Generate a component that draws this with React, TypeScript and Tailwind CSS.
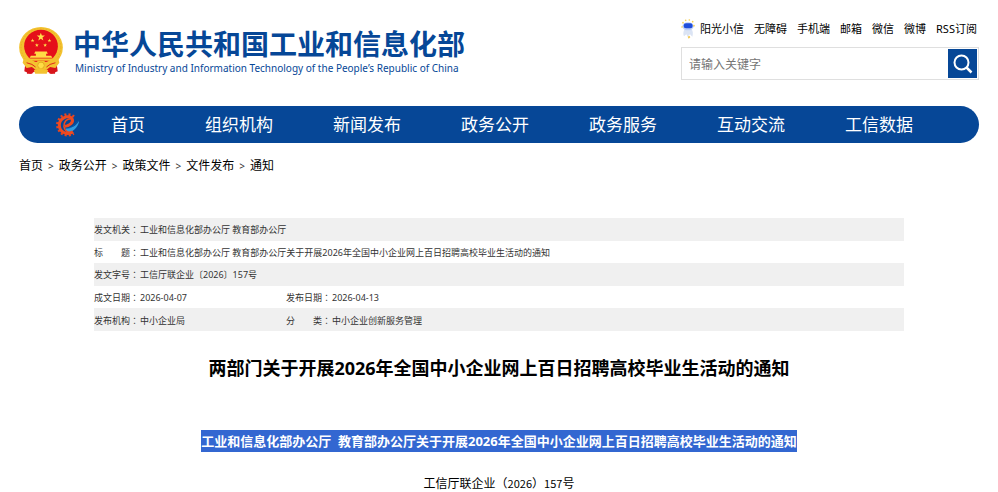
import React from "react";

const SANS = "font-['Noto_Sans','Noto_Sans_CJK_SC',sans-serif]";

const topLinks = ["无障碍", "手机端", "邮箱", "微信", "微博", "RSS订阅"];
const navLinks = ["首页", "组织机构", "新闻发布", "政务公开", "政务服务", "互动交流", "工信数据"];
const crumbs = ["首页", "政务公开", "政策文件", "文件发布", "通知"];

const STAR = "M0-10 2.4-3.2 9.5-3.1 3.8 1.2 5.9 8.1 0 4-5.9 8.1-3.8 1.2-9.5-3.1-2.4-3.2Z";

function Emblem() {
  return (
    <svg viewBox="0 0 133 142" className="h-[47px] w-[44px] shrink-0" role="img" aria-label="国徽">
      <path d="M20 104 16 134 34 141 50 134 83 134 99 141 117 134 113 104Z" fill="#d8151b" />
      <ellipse cx="66.5" cy="62" rx="66" ry="62" fill="#f3c22f" />
      <ellipse cx="66.5" cy="62" rx="60" ry="57" fill="none" stroke="#e3aa20" strokeWidth="2" strokeDasharray="5 4" />
      <ellipse cx="66.5" cy="58" rx="51" ry="50" fill="#e50f1a" />
      <path d={STAR} transform="translate(66 30) scale(1.3)" fill="#ffe04a" />
      <path d={STAR} transform="translate(41 41) scale(.6)" fill="#ffe04a" />
      <path d={STAR} transform="translate(54 55) scale(.6)" fill="#ffe04a" />
      <path d={STAR} transform="translate(79 55) scale(.6)" fill="#ffe04a" />
      <path d={STAR} transform="translate(92 41) scale(.6)" fill="#ffe04a" />
      <path d="M49 74H84L87 81H82V87H97L101 93H32L36 87H51V81H46Z" fill="#ffdc45" />
      <path d="M31 95H102V102H31Z" fill="#f5c52e" />
      <path d="M14 96C30 96 38 104 49 108L57 103H76L84 108C95 104 103 96 119 96L122 108 110 124 94 121 82 130 66 124 51 130 39 121 23 124 11 108Z" fill="#f3c22f" />
      <path d="M23 108 39 113 50 121M110 108 94 113 83 121" fill="none" stroke="#e0251b" strokeWidth="3" />
      <circle cx="66.5" cy="116" r="10" fill="#ffdc45" stroke="#e3aa20" strokeWidth="3" />
      <path d="M24 126 34 131 45 126 40 141H24ZM109 126 99 131 88 126 93 141H109Z" fill="#d8151b" />
      <path d="M45 130 66 124 88 130 84 141H49Z" fill="#f3c22f" />
    </svg>
  );
}

function Mascot() {
  return (
    <svg viewBox="0 0 42 60" className="h-5 w-3.5 shrink-0" aria-hidden="true">
      <path d="M11 30C6 38 6 46 9 52L16 46 20 53 27 46 34 53C37 44 36 36 31 30Z" fill="#dbe4f4" />
      <ellipse cx="21" cy="22" rx="17" ry="12" fill="#bccdf7" />
      <rect x="8" y="13" width="27" height="15" rx="7" fill="#1f4edb" />
      <g fill="#f7cf4e">
        <circle cx="6" cy="11" r="2.5" /><circle cx="14" cy="4" r="2.5" /><circle cx="25" cy="3" r="2.5" />
        <circle cx="35" cy="8" r="2.5" /><circle cx="3" cy="24" r="2.5" /><circle cx="39" cy="20" r="2.5" />
      </g>
      <path d="M20 53 25 50 28 55 23 59Z" fill="#f0c752" />
    </svg>
  );
}

function GearE() {
  return (
    <svg viewBox="0 0 72 72" className="size-6 shrink-0" aria-hidden="true">
      <path d="M57 11A31 31 0 1 0 56 61" fill="none" stroke="#e8451f" strokeWidth="8" strokeDasharray="6 6" />
      <path d="M40 58C52 58 70 44 73 22 60 44 46 44 32 46 32 52 34 56 40 58Z" fill="#2f9be0" />
      <path d="M32 46C48 48 58 36 71 24" fill="none" stroke="#0f62b4" strokeWidth="2" />
      <path d="M54 56C40 66 15 62 13 38 11 14 42 4 51 17 57 28 44 38 29 40" fill="none" stroke="#ee4a20" strokeWidth="9" />
      <path d="M48 17C34 17 26 28 27 41 29 52 36 58 45 59" fill="none" stroke="#ee4a20" strokeWidth="5" />
      <path d="M43 22C36 23 32 29 31 35 39 34 45 29 43 22Z" fill="#064797" />
    </svg>
  );
}

function Label({ text }: { text: string }) {
  return (
    <th scope="row" className="p-0 pt-0.5 text-left font-normal whitespace-nowrap">
      {text}
      <span className="font-['Noto_Sans_CJK_TC',sans-serif]">：</span>
    </th>
  );
}

function Cell({ span, children }: { span?: number; children: React.ReactNode }) {
  return <td colSpan={span} className="p-0 pt-0.5">{children}</td>;
}

function Row({ shaded, children }: { shaded?: boolean; children: React.ReactNode }) {
  return <tr className={shaded ? "bg-[#f0f0f0]" : ""}>{children}</tr>;
}

export default function App() {
  return (
    <div className={`${SANS} bg-white px-[19px] text-black`}>
      <header className="flex justify-between pt-[18px]">
        <a href="#" className="mt-2 flex h-12 items-center gap-2.5 text-[#064797]">
          <Emblem />
          <span className="flex flex-col whitespace-nowrap">
            <span className="text-[28px] leading-9 font-bold">中华人民共和国工业和信息化部</span>
            <span className="pl-0.5 font-['Noto_Sans',sans-serif] text-[10px] leading-3">
              Ministry of Industry and Information Technology of the People’s Republic of China
            </span>
          </span>
        </a>
        <div className="w-[298px]">
          <nav className="flex items-center gap-2.5 text-[11px] leading-[22px] whitespace-nowrap">
            <a href="#" className="flex items-center gap-[5px]">
              <Mascot />
              阳光小信
            </a>
            {topLinks.map((t) => (
              <a key={t} href="#">{t}</a>
            ))}
          </nav>
          <form className="mt-[7px] flex h-[33px] items-center border border-[#dfdfdf] pr-px" onSubmit={(e) => e.preventDefault()}>
            <input
              type="text"
              aria-label="请输入关键字"
              placeholder="请输入关键字"
              className="min-w-0 flex-1 px-[7px] pt-0.5 text-xs outline-none placeholder:text-[#757575]"
            />
            <button type="submit" aria-label="搜索" className="flex size-[29px] items-center justify-center bg-[#064797]">
              <svg viewBox="0 0 20 20" className="size-5" fill="none" stroke="#fff" strokeWidth="2">
                <circle cx="8.5" cy="8.5" r="7" />
                <path d="m13.5 13.5 5 5" strokeWidth="2.5" />
              </svg>
            </button>
          </form>
        </div>
      </header>

      <nav className="mt-[26px] flex h-[37px] items-center rounded-full bg-[#064797] pl-9 text-[17px] text-white">
        <GearE />
        <ul className="ml-8 flex gap-15 whitespace-nowrap">
          {navLinks.map((t) => (
            <li key={t}><a href="#">{t}</a></li>
          ))}
        </ul>
      </nav>

      <nav aria-label="当前位置" className="mt-[13px] text-xs leading-5">
        {crumbs.map((t, i) => (
          <React.Fragment key={t}>
            {i > 0 && <span className="px-[5px] text-[10px] text-[#333]">&gt;</span>}
            <a href="#">{t}</a>
          </React.Fragment>
        ))}
      </nav>

      <main className="px-[75px] pt-[42px]">
        <table className="h-[113px] w-full table-fixed border-collapse text-[9px] leading-3 text-[#333]">
          <colgroup>
            <col className="w-[46px]" />
            <col className="w-[146px]" />
            <col className="w-[46px]" />
            <col />
          </colgroup>
          <tbody>
            <Row shaded>
              <Label text="发文机关" />
              <Cell span={3}>工业和信息化部办公厅 教育部办公厅</Cell>
            </Row>
            <Row>
              <Label text="标　　题" />
              <Cell span={3}>工业和信息化部办公厅 教育部办公厅关于开展2026年全国中小企业网上百日招聘高校毕业生活动的通知</Cell>
            </Row>
            <Row shaded>
              <Label text="发文字号" />
              <Cell span={3}>工信厅联企业〔2026〕157号</Cell>
            </Row>
            <Row>
              <Label text="成文日期" />
              <Cell>2026-04-07</Cell>
              <Label text="发布日期" />
              <Cell>2026-04-13</Cell>
            </Row>
            <Row shaded>
              <Label text="发布机构" />
              <Cell>中小企业局</Cell>
              <Label text="分　　类" />
              <Cell>中小企业创新服务管理</Cell>
            </Row>
          </tbody>
        </table>

        <h1 className="mt-[23px] text-center text-lg leading-7 font-bold">
          两部门关于开展2026年全国中小企业网上百日招聘高校毕业生活动的通知
        </h1>
        <p className="mt-12 text-center text-[13px] leading-[22px] font-bold whitespace-nowrap text-white">
          <span className="inline-block bg-[#3367d1]">
            工业和信息化部办公厅&nbsp; 教育部办公厅关于开展2026年全国中小企业网上百日招聘高校毕业生活动的通知
          </span>
        </p>
        <p className="mt-[21px] text-center font-['Noto_Sans_CJK_SC',sans-serif] text-xs leading-5">
          工信厅联企业（<span className="text-[11px]">2026</span>）<span className="text-[11px]">157</span>号
        </p>
      </main>
    </div>
  );
}
